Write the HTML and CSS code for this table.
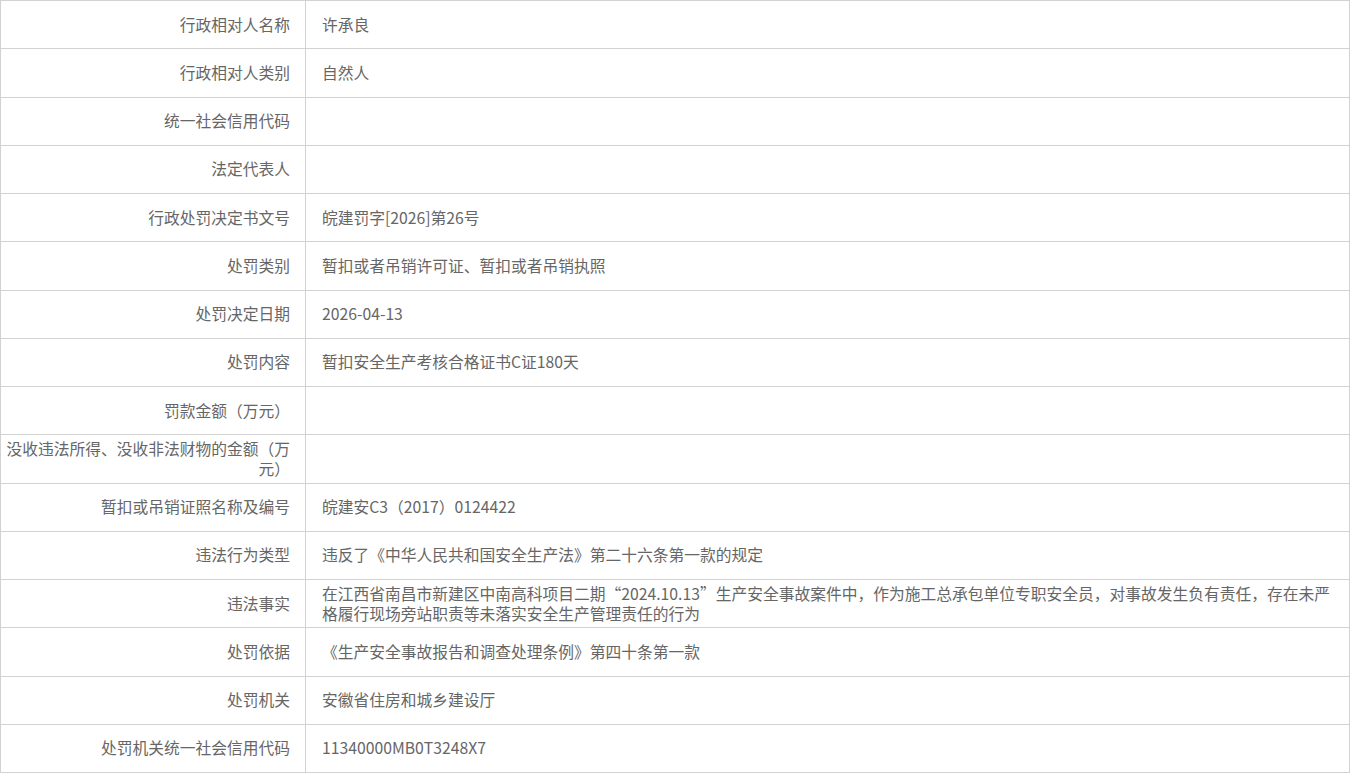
FILE: index.html
```html
<!DOCTYPE html>
<html lang="zh-CN">
<head>
<meta charset="utf-8">
<title>行政处罚信息</title>
<link rel="stylesheet" href="styles.css">
</head>
<body>
<table class="info">
  <colgroup>
    <col class="col-label">
    <col class="col-value">
  </colgroup>
  <tbody>
    <tr><td class="label">行政相对人名称</td><td class="value">许承良</td></tr>
    <tr><td class="label">行政相对人类别</td><td class="value">自然人</td></tr>
    <tr><td class="label">统一社会信用代码</td><td class="value"></td></tr>
    <tr><td class="label">法定代表人</td><td class="value"></td></tr>
    <tr><td class="label">行政处罚决定书文号</td><td class="value">皖建罚字[2026]第26号</td></tr>
    <tr><td class="label">处罚类别</td><td class="value">暂扣或者吊销许可证、暂扣或者吊销执照</td></tr>
    <tr><td class="label">处罚决定日期</td><td class="value">2026-04-13</td></tr>
    <tr><td class="label">处罚内容</td><td class="value">暂扣安全生产考核合格证书C证180天</td></tr>
    <tr><td class="label">罚款金额（万元）</td><td class="value"></td></tr>
    <tr><td class="label">没收违法所得、没收非法财物的金额（万元）</td><td class="value"></td></tr>
    <tr><td class="label">暂扣或吊销证照名称及编号</td><td class="value">皖建安C3（2017）0124422</td></tr>
    <tr><td class="label">违法行为类型</td><td class="value">违反了《中华人民共和国安全生产法》第二十六条第一款的规定</td></tr>
    <tr><td class="label">违法事实</td><td class="value">在江西省南昌市新建区中南高科项目二期“2024.10.13”生产安全事故案件中，作为施工总承包单位专职安全员，对事故发生负有责任，存在未严格履行现场旁站职责等未落实安全生产管理责任的行为</td></tr>
    <tr><td class="label">处罚依据</td><td class="value">《生产安全事故报告和调查处理条例》第四十条第一款</td></tr>
    <tr><td class="label">处罚机关</td><td class="value">安徽省住房和城乡建设厅</td></tr>
    <tr><td class="label">处罚机关统一社会信用代码</td><td class="value">11340000MB0T3248X7</td></tr>
  </tbody>
</table>
</body>
</html>
```

FILE: styles.css
```css
html, body {
  margin: 0;
  padding: 0;
  background: #ffffff;
}

body {
  font-family: "Noto Sans CJK SC", "Noto Sans", "Liberation Sans", sans-serif;
  font-size: 15.75px;
  line-height: 20px;
  color: #666666;
}

.info {
  width: 1350px;
  border-collapse: collapse;
  table-layout: fixed;
}

.col-label {
  width: 305px;
}

.info tr {
  height: 48.25px;
}

.info td {
  border: 1px solid #d2d2d2;
  vertical-align: middle;
  word-break: break-all;
}

.info .label {
  padding: 0 15px 0 5px;
  text-align: right;
}

.info .value {
  padding: 0 17px 0 16px;
  text-align: left;
}
```
